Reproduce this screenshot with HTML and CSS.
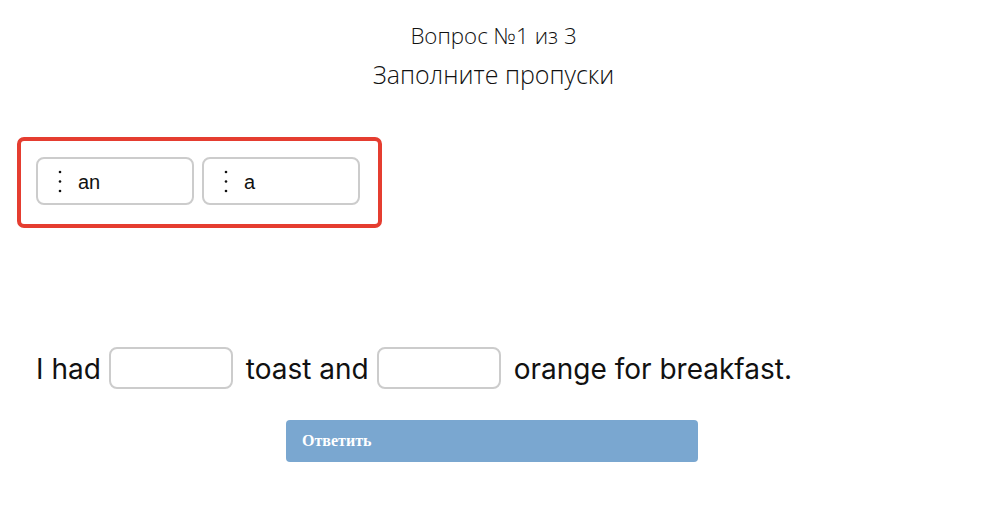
FILE: index.html
```html
<!DOCTYPE html>
<html lang="ru">
<head>
<meta charset="utf-8">
<title>Вопрос №1 из 3</title>
<link rel="stylesheet" href="styles.css">
</head>
<body>
<div class="page">
  <header class="head">
    <div class="head-line head-small">Вопрос №1 из 3</div>
    <div class="head-line head-big">Заполните пропуски</div>
  </header>

  <div class="bank">
    <div class="chip">
      <svg class="grip" width="4" height="24" viewBox="0 0 4 24"><circle cx="2" cy="2" r="1.3"/><circle cx="2" cy="11.5" r="1.3"/><circle cx="2" cy="21" r="1.3"/></svg>
      <span class="chip-text">an</span>
    </div>
    <div class="chip">
      <svg class="grip" width="4" height="24" viewBox="0 0 4 24"><circle cx="2" cy="2" r="1.3"/><circle cx="2" cy="11.5" r="1.3"/><circle cx="2" cy="21" r="1.3"/></svg>
      <span class="chip-text">a</span>
    </div>
  </div>

  <div class="sentence">
    <span class="word">I had</span>
    <span class="gap-box"></span>
    <span class="word">toast and</span>
    <span class="gap-box"></span>
    <span class="word">orange for breakfast.</span>
  </div>

  <div class="actions">
    <button class="submit" type="button">Ответить</button>
  </div>
</div>
</body>
</html>
```

FILE: styles.css
```css
html, body {
  margin: 0;
  padding: 0;
  background: #ffffff;
}

.page {
  width: 987px;
  padding-top: 17px;
}

.head {
  text-align: center;
  font-family: "Open Sans", "Liberation Sans", sans-serif;
  font-weight: 300;
  color: #111111;
}

.head-line {
  line-height: 38px;
}

.head-small {
  font-size: 22.3px;
}

.head-big {
  font-size: 25px;
}

.bank {
  margin: 44px 0 0 17px;
  width: 365px;
  height: 91px;
  box-sizing: border-box;
  border: 4px solid #e53d30;
  border-radius: 7px;
  padding: 16px 0 0 15px;
  display: flex;
  gap: 8px;
}

.chip {
  width: 158px;
  height: 48px;
  box-sizing: border-box;
  border: 2px solid #cccccc;
  border-radius: 8px;
  display: flex;
  align-items: center;
  padding-left: 20px;
}

.grip {
  fill: #111111;
  margin-top: 2px;
  flex: none;
}

.chip-text {
  margin-left: 16px;
  font-family: "Liberation Sans", Arial, sans-serif;
  font-size: 20px;
  color: #111111;
  margin-top: 2px;
}

.sentence {
  margin: 119px 0 0 36px;
  display: flex;
  align-items: center;
  font-family: Inter, "Liberation Sans", sans-serif;
  font-size: 28px;
  color: #111111;
  height: 41px;
}

.word {
  line-height: 41px;
  padding-top: 4px;
}

.gap-box {
  width: 124px;
  height: 42px;
  box-sizing: border-box;
  border: 2px solid #cccccc;
  border-radius: 8px;
  margin: 0 13px 0 8px;
  flex: none;
}

.actions {
  margin-top: 32px;
  display: flex;
  justify-content: center;
}

.submit {
  width: 412px;
  height: 42px;
  margin-left: -3px;
  border: none;
  border-radius: 4px;
  background: #7aa7d0;
  color: #ffffff;
  font-family: "Liberation Serif", "Times New Roman", serif;
  font-weight: bold;
  font-size: 16px;
  text-align: left;
  padding: 0 0 0 16px;
}
```
